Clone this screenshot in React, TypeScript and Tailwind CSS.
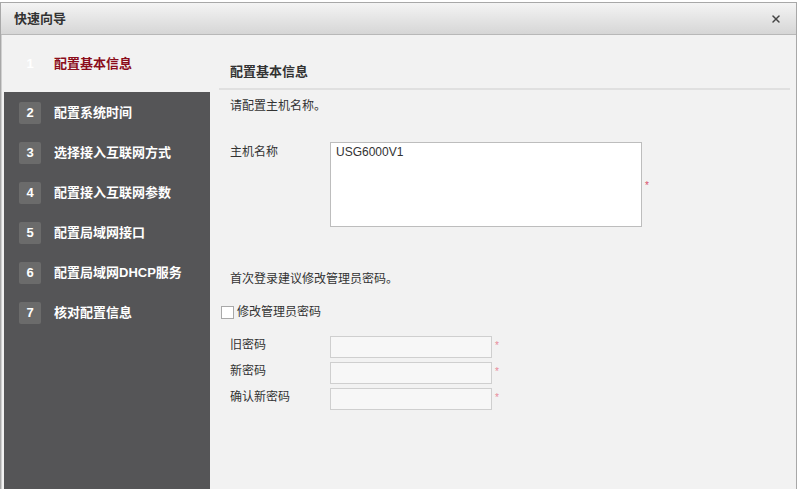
import { X } from 'lucide-react';

const steps = [
  '配置基本信息',
  '配置系统时间',
  '选择接入互联网方式',
  '配置接入互联网参数',
  '配置局域网接口',
  '配置局域网DHCP服务',
  '核对配置信息',
];

const font = 'font-["Liberation_Sans","Noto_Sans_CJK_SC",sans-serif]';

function PasswordRow({ label }: { label: string }) {
  return (
    <div className="flex items-start h-[26px]">
      <div className="w-[110px] pl-[10px] text-[12px] leading-[18px] text-[#333]">{label}</div>
      <div className="w-[162px] h-[22px] bg-[#f7f7f7] border border-[#cfcfcf]" />
      <span className="ml-[3px] mt-[2px] text-[10px] text-[#e88a9a]">*</span>
    </div>
  );
}

export default function App() {
  return (
    <div className={`w-[797px] h-[489px] overflow-hidden bg-white ${font}`}>
      <div className="h-full mt-[2px] border-t border-l border-r border-[#a8a8a8] bg-[#f2f2f2] flex flex-col">
        {/* title bar */}
        <div className="h-[32px] shrink-0 flex items-center justify-between pl-[13px] pr-[14px] bg-gradient-to-b from-[#f4f4f4] to-[#d6d6d6] border-b border-[#b8b8b8]">
          <span className="text-[13px] font-bold text-[#333]">快速向导</span>
          <X size={12} strokeWidth={3} className="text-[#444]" />
        </div>

        <div className="flex flex-1 min-h-0 pl-[2px] border-l border-[#d0d0d0]">
          {/* sidebar */}
          <div className="w-[206px] shrink-0 flex flex-col">
            <div className="h-[57px] flex items-center bg-[#f2f2f2]">
              <span className="w-[22px] ml-[15px] text-center text-[13px] font-bold text-white">1</span>
              <span className="ml-[13px] text-[13px] font-bold text-[#8b0d1b]">{steps[0]}</span>
            </div>
            <div className="flex-1 bg-[#555557] pt-[1px]">
              {steps.slice(1).map((s, i) => (
                <div key={s} className="h-[40px] flex items-center">
                  <span className="w-[22px] h-[22px] ml-[15px] flex items-center justify-center bg-[#6b6b6b] rounded-[2px] text-[13px] font-bold text-white">
                    {i + 2}
                  </span>
                  <span className="ml-[13px] text-[13px] font-bold text-white">{s}</span>
                </div>
              ))}
            </div>
          </div>

          {/* content */}
          <div className="flex-1 pl-[9px] pr-[6px]">
            <div className="h-[55px] pt-[24px] pl-[11px] border-b-2 border-[#e0e0e0]">
              <span className="text-[13px] font-bold text-[#333]">配置基本信息</span>
            </div>
            <div className="pl-[11px] pt-[7px] text-[12px] text-[#333]">请配置主机名称。</div>

            <div className="flex items-start mt-[27px]">
              <div className="w-[111px] pl-[11px] pt-[1px] text-[12px] text-[#333]">主机名称</div>
              <div className="w-[312px] h-[85px] bg-white border border-[#bdbdbd] pl-[5px] pt-0 text-[12px] text-[#333]">
                USG6000V1
              </div>
              <span className="ml-[3px] mt-[36px] text-[10px] text-[#d9506a]">*</span>
            </div>

            <div className="pl-[11px] mt-[43px] text-[12px] text-[#333]">首次登录建议修改管理员密码。</div>

            <label className="flex items-center mt-[15px] pl-[2px]">
              <span className="w-[13px] h-[13px] bg-white border border-[#a9a9a9]" />
              <span className="ml-[3px] text-[12px] text-[#333]">修改管理员密码</span>
            </label>

            <div className="mt-[15px] pl-[1px]">
              <PasswordRow label="旧密码" />
              <PasswordRow label="新密码" />
              <PasswordRow label="确认新密码" />
            </div>
          </div>
        </div>
      </div>
    </div>
  );
}
